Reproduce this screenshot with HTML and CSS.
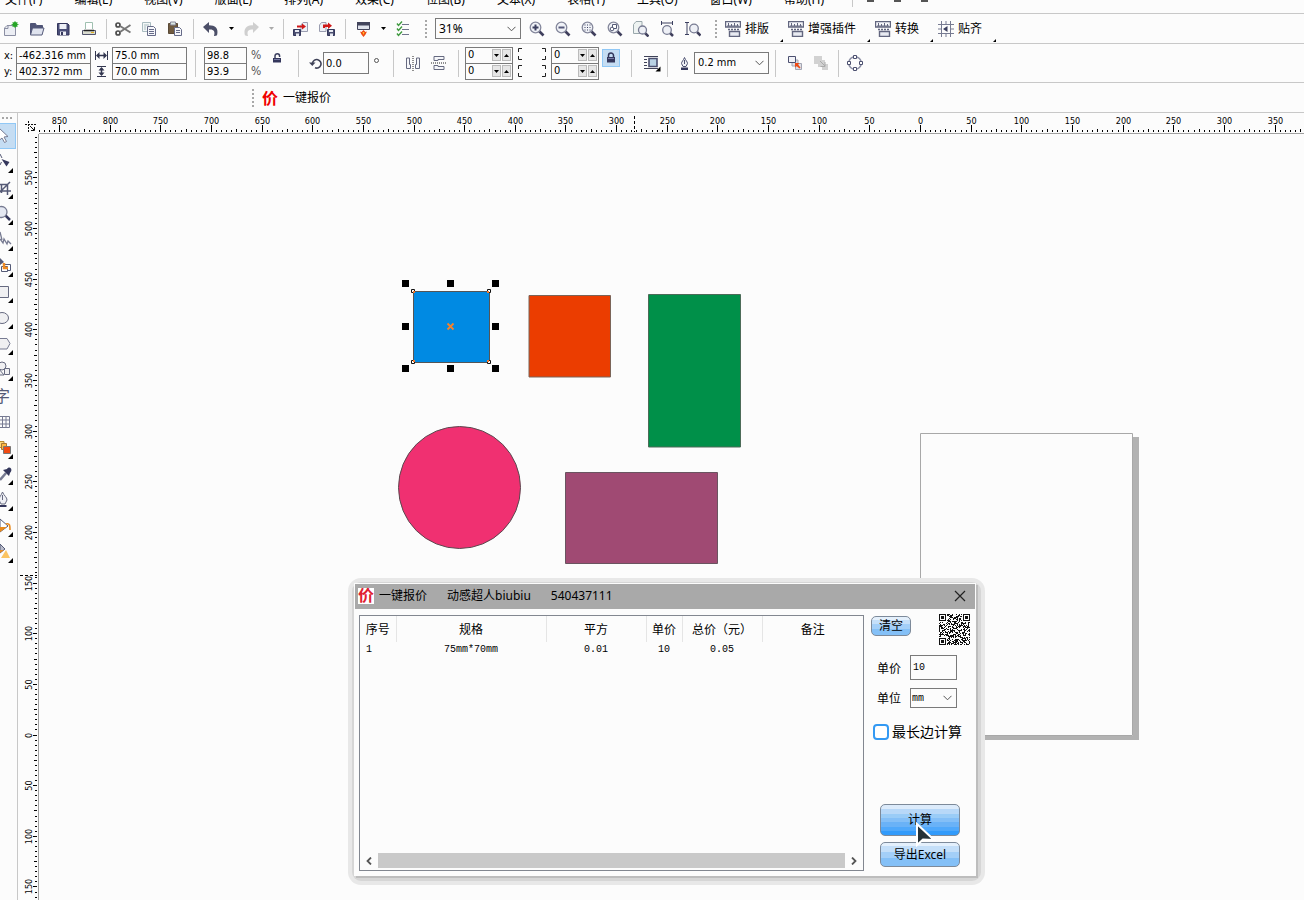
FILE: index.html
```
<!DOCTYPE html>
<html lang="zh-CN">
<head>
<meta charset="utf-8">
<title>一键报价</title>
<link rel="stylesheet" href="styles.css">
</head>
<body>
<svg class="defs" aria-hidden="true">
  <symbol id="i-chev" viewBox="0 0 9 6"><path d="M.5 .8l4 4 4-4" fill="none" stroke="#555"/></symbol>
  <symbol id="i-down" viewBox="0 0 5 3"><path d="M0 0h5L2.500 3z"/></symbol>
  <symbol id="i-up" viewBox="0 0 5 3"><path d="M0 3h5L2.500 0z"/></symbol>
  <symbol id="i-mag" viewBox="0 0 16 16"><path d="M10 10l4.500 4.500" stroke="#3f3f5c" stroke-width="2.600"/><circle cx="6.500" cy="6.500" r="5.300" fill="#f1f3f8" stroke="#85889c" stroke-width="1.300"/></symbol>
  <symbol id="i-press" viewBox="0 0 16 16"><path d="M.5 .5h15v5.500H.5z" fill="#f5f6fa" stroke="#62667f" stroke-width="1.400"/><path d="M3.500 2v3M6.500 3v2M9.500 2v3M12.500 3v2M2 5h12" stroke="#62667f"/><path d="M3 8.500h11" stroke="#62667f" stroke-width="1.500" stroke-dasharray="2 1"/><path d="M4.500 10.500h10v5h-10z" fill="#e9ebf2" stroke="#62667f" stroke-width="1.400"/></symbol>
</svg>

<nav class="menubar">
  <a href="#">文件(F)</a><a href="#">编辑(E)</a><a href="#">视图(V)</a><a href="#">版面(L)</a><a href="#">排列(A)</a><a href="#">效果(C)</a><a href="#">位图(B)</a><a href="#">文本(X)</a><a href="#">表格(T)</a><a href="#">工具(O)</a><a href="#">窗口(W)</a><a href="#">帮助(H)</a>
  <div class="win-marks"><i></i><i></i><i></i></div>
</nav>

<div class="bar main-bar">
  <button class="tb" aria-label="新建"><svg viewBox="0 0 16 16"><path d="M4 4.500h8.500v10h-11V7z" fill="#eceef4" stroke="#8b8fa3"/><path d="M2 7.500h3v-3" fill="none" stroke="#8b8fa3"/><circle cx="12" cy="3.500" r="2.500" fill="#27a527"/><path d="M12 0v7M8.500 3.500h7M9.500 1l5 5M14.500 1l-5 5" stroke="#27a527" stroke-width=".8"/></svg></button>
  <button class="tb" aria-label="打开"><svg viewBox="0 0 16 16"><path d="M1.500 13V2.500h5l1 2h6V7" fill="#4f5476" stroke="#4f5476"/><path d="M3.500 7h11.500l-2 7H1.500z" fill="#dfe3ee" stroke="#555a7a"/></svg></button>
  <button class="tb" aria-label="保存"><svg viewBox="0 0 16 16"><path d="M2.500 2.500h10l1.500 1.500v10H2.500z" fill="#4a4e78" stroke="#34375c"/><path d="M4.500 3h7v5h-7z" fill="#eef0f7"/><path d="M5 10.500h6V14H5z" fill="#eef0f7"/><path d="M6 11h2v3H6z" fill="#34375c"/></svg></button>
  <button class="tb" aria-label="打印"><svg viewBox="0 0 16 16"><path d="M4.500 8V1.500h7V8" fill="#fff" stroke="#9fc0b0"/><path d="M1.500 9.500h13v4h-13z" fill="#d9dbcf" stroke="#50536a"/><path d="M3 9.500h10" stroke="#222" stroke-width="1.500"/><path d="M10 11.500h3" stroke="#e0b020"/></svg></button>
  <i class="sep tight"></i>
  <button class="tb" aria-label="剪切"><svg viewBox="0 0 16 16"><g fill="none" stroke="#4c4c4c" stroke-width="1.700"><circle cx="3" cy="4" r="2"/><circle cx="3" cy="12" r="2"/></g><path d="M5 5l10.500 6.500M5 11l10.500-7" stroke="#777" stroke-width="2"/></svg></button>
  <button class="tb" aria-label="复制"><svg viewBox="0 0 16 16"><path d="M1.500 1.500h8v9h-8z" fill="#f3f7f7" stroke="#a9bcc0"/><path d="M3 4h5M3 6h2M3 8h2" stroke="#a9bcc0"/><path d="M6.500 5.500h6l2 2v7h-8z" fill="#f6f7fb" stroke="#666b88"/><path d="M8 8.500h5M8 10.500h5M8 12.500h5" stroke="#666b88"/></svg></button>
  <button class="tb" aria-label="粘贴"><svg viewBox="0 0 16 16"><path d="M1.500 2.500h9v10h-9z" fill="#6f5a3f" stroke="#5a4a38"/><path d="M3.500 1h5v3h-5z" fill="#dce8e4" stroke="#889"/><path d="M7.500 6.500h5l2 2v6h-7z" fill="#f6f7fb" stroke="#666b88"/><path d="M9 9.500h4M9 11.500h4" stroke="#666b88"/></svg></button>
  <i class="sep"></i>
  <button class="tb" aria-label="撤销"><svg viewBox="0 0 16 16"><path d="M0 6l6-5v3.200c6 0 10 2.800 8 10.300-1 0-1.500.5-3 .5 1.500-5-.5-7-5-6.500V12z" fill="#4c4f68"/></svg></button>
  <button class="drop" aria-label="撤销列表"><svg viewBox="0 0 5 3"><use href="#i-down"/></svg></button>
  <button class="tb" aria-label="重做"><svg viewBox="0 0 16 16"><path d="M16 6l-6-5v3.200c-6 0-10 2.800-8 10.300 1 0 1.500.5 3 .5-1.500-5 .5-7 5-6.500V12z" fill="#cfcfcf"/></svg></button>
  <button class="drop dim" aria-label="重做列表"><svg viewBox="0 0 5 3"><use href="#i-down"/></svg></button>
  <i class="sep"></i>
  <button class="tb" aria-label="导入"><svg viewBox="0 0 16 16"><path d="M8 4l2-2.500h4.500v9H8z" fill="#eef0f6" stroke="#9a9db0"/><path d="M.5 8.500h7v6h-7z" fill="#4a4e70" stroke="#34375c"/><path d="M2 9h4v2H2zM3 12.500h3V15H3z" fill="#e8eaf2"/><path d="M4 6.500V4.500h5V2.500l4 3-4 3V6.500z" fill="#d01818"/></svg></button>
  <button class="tb" aria-label="导出"><svg viewBox="0 0 16 16"><path d="M.5 4l2-2.500H7v9H.5z" fill="#eef0f6" stroke="#9a9db0"/><path d="M8.500 8.500h7v6h-7z" fill="#4a4e70" stroke="#34375c"/><path d="M10 9h4v2h-4zM11 12.500h3V15h-3z" fill="#e8eaf2"/><path d="M4 7V3.500h5V1.500l4 3.200L9 8V6H6v1z" fill="#d01818"/></svg></button>
  <i class="sep"></i>
  <button class="tb" aria-label="应用程序启动器"><svg viewBox="0 0 16 16"><path d="M2.500 1.500h12v7h-12z" fill="#dfe3ec" stroke="#42455c"/><path d="M2 1h13v3.500H2z" fill="#42455c"/><path d="M5 10.500l1.500.5L8.500 9l2 2 1.500-.5-1.500 3L8.500 16l-2-2.500z" fill="#f04a12"/><path d="M7.500 11h2l-1 3z" fill="#ffc030"/></svg></button>
  <button class="drop" aria-label="启动器列表"><svg viewBox="0 0 5 3"><use href="#i-down"/></svg></button>
  <button class="tb" aria-label="选项"><svg viewBox="0 0 16 16"><path d="M7 3.500h7M7 8.500h7M7 13.500h7" stroke="#70758c"/><path d="M2 2.500l1.500 2L7 .5M2 7.500l1.500 2L7 5.500M2 12.500l1.500 2 3.500-4" fill="none" stroke="#3f9a3f" stroke-width="1.400"/></svg></button>
  <i class="grip"></i>
  <div class="select zoom-level"><select aria-label="缩放级别"><option>31%</option></select><svg class="chev"><use href="#i-chev"/></svg></div>
  <div class="zooms">
    <button class="tb" aria-label="放大"><svg viewBox="0 0 16 16"><use href="#i-mag"/><path d="M3.500 6.500h6M6.500 3.500v6" stroke="#3c4060" stroke-width="2"/></svg></button>
    <button class="tb" aria-label="缩小"><svg viewBox="0 0 16 16"><use href="#i-mag"/><path d="M3.500 6.500h6" stroke="#55597a" stroke-width="2"/></svg></button>
    <button class="tb" aria-label="缩放选定对象"><svg viewBox="0 0 16 16"><use href="#i-mag"/><path d="M3.500 4h6M3.500 6.500h6M3.500 9h6" stroke="#3c4060" stroke-dasharray="1 1.500"/></svg></button>
    <button class="tb" aria-label="缩放全部对象"><svg viewBox="0 0 16 16"><use href="#i-mag"/><path d="M5.500 3.500h4v4h-4z" fill="#fff" stroke="#555a76"/><circle cx="5" cy="8" r="1.800" fill="#fff" stroke="#555a76"/></svg></button>
    <button class="tb" aria-label="显示页面"><svg viewBox="0 0 16 16"><path d="M.5 3.500l2.500-3h6v12H.5z" fill="#eef3f2" stroke="#9aa8ac"/><path d="M12 12l3.500 3.500" stroke="#3f3f5c" stroke-width="2.500"/><circle cx="9.500" cy="9" r="4" fill="#eef0f6" stroke="#777b92" stroke-width="1.300"/></svg></button>
    <button class="tb" aria-label="按页宽显示"><svg viewBox="0 0 16 16"><path d="M2.500 0v4M13.500 0v4M3 2h10" stroke="#3c4060"/><path d="M11 12l3 3" stroke="#3f3f5c" stroke-width="2.500"/><circle cx="8" cy="9" r="4.300" fill="#eef0f6" stroke="#777b92" stroke-width="1.300"/></svg></button>
    <button class="tb" aria-label="按页高显示"><svg viewBox="0 0 16 16"><path d="M0 1.500h4M0 13.500h4M2 2v11" stroke="#3c4060"/><path d="M12 11l3.500 3.500" stroke="#3f3f5c" stroke-width="2.500"/><circle cx="9" cy="7.500" r="4.300" fill="#eef0f6" stroke="#777b92" stroke-width="1.300"/></svg></button>
  </div>
  <i class="grip"></i>
  <div class="plugins">
    <button class="plugin"><svg viewBox="0 0 16 16"><use href="#i-press"/></svg>排版</button>
    <button class="plugin"><svg viewBox="0 0 16 16"><use href="#i-press"/></svg>增强插件</button>
    <button class="plugin"><svg viewBox="0 0 16 16"><use href="#i-press"/></svg>转换</button>
    <button class="plugin"><svg viewBox="0 0 16 16"><path d="M3.500 0v16M8 0v3M8 13v3M12.500 0v16M0 3.500h16M0 8h3M13 8h3M0 12.500h16" stroke="#777b92"/><path d="M9.500 5v6L5 8z" fill="#3c4060"/></svg>贴齐</button>
  </div>
</div>

<div class="bar prop-bar">
  <div class="pair labels"><label for="px">x:</label><label for="py">y:</label></div>
  <div class="pair fields"><input id="px" value="-462.316 mm"><input id="py" value="402.372 mm"></div>
  <div class="pair marks"><svg viewBox="0 0 13 11"><path d="M.5 1v9M12.500 1v9" stroke="#333750"/><path d="M2 5.500h9" stroke="#333750" stroke-width="1.500"/><path d="M1 5.500L4.500 2v7zM12 5.500L8.500 2v7z" fill="#333750"/></svg><svg viewBox="0 0 13 11"><path d="M2 .5h9M2 10.500h9" stroke="#333750"/><path d="M6.500 2v7" stroke="#333750" stroke-width="1.500"/><path d="M6.500 1L9.500 4.500h-6zM6.500 10l3-3.500h-6z" fill="#333750"/></svg></div>
  <div class="pair fields"><input aria-label="宽度" value="75.0 mm"><input aria-label="高度" value="70.0 mm"></div>
  <i class="sep wide"></i>
  <div class="pair fields short"><input aria-label="水平缩放" value="98.8"><input aria-label="垂直缩放" value="93.9"></div>
  <div class="pair percent"><span>%</span><span>%</span></div>
  <button class="tb lock" aria-label="锁定比率"><svg viewBox="0 0 16 16"><path d="M6 8.500V6a2.300 2.300 0 0 1 4.600 0v1" fill="none" stroke="#3c4060" stroke-width="1.500"/><path d="M4 8h8v4.500H4z" fill="#34375c"/><path d="M5 9.500h6" stroke="#777ba5"/></svg></button>
  <i class="sep wide"></i>
  <label class="mark" for="rot" aria-label="旋转角度"><svg viewBox="0 0 13 13"><path d="M3.500 6A4.300 4.300 0 1 1 6 10.800" fill="none" stroke="#3f4258" stroke-width="1.600"/><path d="M0 5.500h6.500L3.300 9z" fill="#3f4258"/></svg></label>
  <input class="field" id="rot" value="0.0">
  <span class="degree"></span>
  <i class="sep"></i>
  <button class="tb" aria-label="水平镜像"><svg viewBox="0 0 16 16"><path d="M1.500 3v10.500h4v-4h-1V3zM14.500 3v10.500h-4v-4h1V3z" fill="#f6f7fa" stroke="#666a80"/><path d="M8 1v15" stroke="#222" stroke-dasharray="1 1"/></svg></button>
  <button class="tb" aria-label="垂直镜像"><svg viewBox="0 0 16 16"><path d="M3 1.500h10v3H7v1H3zM3 14.500h10v-3H7v-1H3z" fill="#f6f7fa" stroke="#666a80"/><path d="M0 8h16" stroke="#222" stroke-dasharray="1 1"/></svg></button>
  <i class="sep"></i>
  <div class="pair spins">
    <div class="spin"><input aria-label="左上角圆角" value="0"><button aria-label="减"><svg viewBox="0 0 5 3"><use href="#i-down"/></svg></button><button aria-label="加"><svg viewBox="0 0 5 3"><use href="#i-up"/></svg></button></div>
    <div class="spin"><input aria-label="左下角圆角" value="0"><button aria-label="减"><svg viewBox="0 0 5 3"><use href="#i-down"/></svg></button><button aria-label="加"><svg viewBox="0 0 5 3"><use href="#i-up"/></svg></button></div>
  </div>
  <svg class="corners" viewBox="0 0 38 32"><path d="M9 1.500H5.500V5M5.500 9v3.500H9M29 1.500h3.500V5M32.500 9v3.500H29M9 18.500H5.500V22M5.500 26v3.500H9M29 18.500h3.500V22M32.500 26v3.500H29" fill="none" stroke="#222"/></svg>
  <div class="pair spins">
    <div class="spin"><input aria-label="右上角圆角" value="0"><button aria-label="减"><svg viewBox="0 0 5 3"><use href="#i-down"/></svg></button><button aria-label="加"><svg viewBox="0 0 5 3"><use href="#i-up"/></svg></button></div>
    <div class="spin"><input aria-label="右下角圆角" value="0"><button aria-label="减"><svg viewBox="0 0 5 3"><use href="#i-down"/></svg></button><button aria-label="加"><svg viewBox="0 0 5 3"><use href="#i-up"/></svg></button></div>
  </div>
  <button class="lock-on" aria-label="一起编辑"><svg viewBox="0 0 16 16"><path d="M5.500 7V5.500a2.500 2.500 0 0 1 5 0V7" fill="none" stroke="#34375c" stroke-width="1.500"/><path d="M4 7h8v5.500H4z" fill="#34375c"/><path d="M5 8.500h6" stroke="#777ba5"/></svg></button>
  <i class="sep wide"></i>
  <button class="wrap" aria-label="段落文本换行"><svg viewBox="0 0 18 18"><path d="M1 2.500h14M1 5.500h3M1 8.500h3M1 11.500h3M1 14.500h14" stroke="#3f4258"/><path d="M6 4.500h8v8H6z" fill="#b9d2e4" stroke="#4c5070" stroke-width="1.600"/><path d="M17.500 12.500v5h-5z"/></svg></button>
  <i class="sep"></i>
  <label class="mark pen" for="outline" aria-label="轮廓宽度"><svg viewBox="0 0 13 13"><path d="M6.500 .5c-1 3-3 4-3 6L5 9.500h3l1.500-3c0-2-2-3-3-6z" fill="#f0f1f6" stroke="#4c5070"/><path d="M6.500 3v4" stroke="#4c5070"/><path d="M3 10.500h7V13H3z" fill="#34375c"/></svg></label>
  <div class="select outline"><select id="outline"><option>0.2 mm</option></select><svg class="chev"><use href="#i-chev"/></svg></div>
  <i class="sep"></i>
  <button class="tb" aria-label="到图层前面"><svg viewBox="0 0 16 16"><path d="M8.500 8.500h6v6h-6zM5 5h6v6H5z" fill="#dfe0e6" stroke="#a3a5b2"/><path d="M1.500 1.500h7v6h-7z" fill="#f2f3f8" stroke="#4c5070"/><path d="M8 8h4.500L11 9.500l2.500 3-1 1-3-2.500L8 12.500z" fill="#f04a12"/></svg></button>
  <button class="tb" aria-label="到图层后面"><svg viewBox="0 0 16 16"><path d="M1 1h8v8H1zM9 9h6v6H9zM5 5h7v7H5z" fill="#d2d2d2"/><path d="M7 6l5 5m0-4v4.500H7.500" fill="none" stroke="#aaa"/></svg></button>
  <i class="sep tight"></i>
  <button class="tb" aria-label="转换为曲线"><svg viewBox="0 0 16 16"><circle cx="8" cy="8" r="6.300" fill="none" stroke="#8a8da3" stroke-width="1.500"/><path d="M6.500 .5h3v3h-3zM6.500 12.500h3v3h-3zM.5 6.500h3v3h-3zM12.500 6.500h3v3h-3z" fill="#fff" stroke="#4c5070"/></svg></button>
</div>

<div class="bar quote-bar">
  <i class="grip"></i>
  <button class="quote"><b>价</b>一键报价</button>
</div>

<main class="work">
  <div class="toolbox">
    <i class="grip-h"></i>
    <button class="tool active" aria-label="选择工具"><svg viewBox="0 0 17 26"><path d="M-1 5l9 8.500-4 .5 2.500 4.500-2 1L2 15l-3 2.500z" fill="#fff" stroke="#777b92"/></svg></button>
    <button class="tool sub" aria-label="形状工具"><svg viewBox="0 0 17 26"><path d="M0 5l2 4M0 16l1.500-3" stroke="#555a76"/><path d="M1.500 10l8 3-3 4.500z" fill="#34375c"/></svg></button>
    <button class="tool sub" aria-label="裁剪工具"><svg viewBox="0 0 17 26"><path d="M0 9.500h7.500V20M0 16h11M1.500 18V10M0 17L10 7" fill="none" stroke="#555a76" stroke-width="1.500"/></svg></button>
    <button class="tool sub" aria-label="缩放工具"><svg viewBox="0 0 17 26"><path d="M5 14l5 5" stroke="#34375c" stroke-width="2.500"/><circle cx="1.500" cy="11" r="5.500" fill="#e4e8f2" stroke="#777b92" stroke-width="1.300"/></svg></button>
    <button class="tool sub" aria-label="手绘工具"><svg viewBox="0 0 17 26"><path d="M0 5l2 8M0 12l3 4 1-4 3 5 1-3 3 3" fill="none" stroke="#777b92" stroke-width="1.300"/></svg></button>
    <button class="tool sub" aria-label="智能填充工具"><svg viewBox="0 0 17 26"><path d="M0 5l4 4-4 3" fill="#555a76"/><path d="M4.500 11.500h6v6h-6z" fill="#fff" stroke="#555a76"/><path d="M1.500 13.500h6v5h-6z" fill="#fff" stroke="#555a76"/><path d="M4 10v5h4" fill="none" stroke="#f08a20" stroke-width="2.500"/></svg></button>
    <button class="tool sub" aria-label="矩形工具"><svg viewBox="0 0 17 26"><path d="M-1 7.500h9.500v11H-1z" fill="#f0f0f2" stroke="#666a80"/></svg></button>
    <button class="tool sub" aria-label="椭圆工具"><svg viewBox="0 0 17 26"><ellipse cx="2" cy="13" rx="6.500" ry="5.500" fill="#f0f0f2" stroke="#666a80"/></svg></button>
    <button class="tool sub" aria-label="多边形工具"><svg viewBox="0 0 17 26"><path d="M-1 7.500h8l3 5-3 5.500h-8z" fill="#f0f0f2" stroke="#777b92"/></svg></button>
    <button class="tool sub" aria-label="基本形状"><svg viewBox="0 0 17 26"><circle cx="2" cy="9" r="4" fill="#f0f0f2" stroke="#666a80"/><path d="M-1 12l5 6h-5zM4.500 11.500h5v6h-5z" fill="#f0f0f2" stroke="#666a80"/></svg></button>
    <button class="tool text-tool" aria-label="文本工具"><span>字</span></button>
    <button class="tool" aria-label="表格工具"><svg viewBox="0 0 17 26"><path d="M-1 7.500H9.500v11H-1M-1 11h10M-1 15h10M2.500 8v10M6 8v10" fill="none" stroke="#777b92"/></svg></button>
    <button class="tool sub" aria-label="调和工具"><svg viewBox="0 0 17 26"><path d="M-1 6.500h5v6h-5z" fill="#ffd979" stroke="#b98a30"/><path d="M1.500 8.500h5v6h-5z" fill="#fdb740" stroke="#a87430"/><path d="M3.500 11.500h7v7h-7z" fill="#f04a12" stroke="#777"/></svg></button>
    <button class="tool sub" aria-label="滴管工具"><svg viewBox="0 0 17 26"><path d="M0 19l6-7" stroke="#777b92" stroke-width="2.500"/><path d="M3 9l6 6 1-3c1-1 2-3 1-4.500S8 6 7 8z" fill="#34375c"/></svg></button>
    <button class="tool sub" aria-label="轮廓笔"><svg viewBox="0 0 17 26"><path d="M2.500 5C1 9 -1 10-1 13l2 4h4l2-4c0-3-3-4-4.500-8z" fill="#f0f1f6" stroke="#666a80"/><path d="M2.500 8v5" stroke="#666a80"/><path d="M0 18h6.500v2H0z" fill="#34375c"/></svg></button>
    <button class="tool sub" aria-label="填充工具"><svg viewBox="0 0 17 26"><path d="M0 6l8 7-8 6z" fill="#fff" stroke="#555a76"/><path d="M0 14h7l-7 5z" fill="#e98a1c"/><path d="M6 11c4-1 4 2 4 6" fill="none" stroke="#e98a1c" stroke-width="1.600"/></svg></button>
    <button class="tool sub" aria-label="交互式填充"><svg viewBox="0 0 17 26"><path d="M0 5l5 5-5 4z" fill="#b9bccb" stroke="#555a76"/><path d="M0 11h4l-4 3z" fill="#e98a1c"/><path d="M6 11l4 8H1z" fill="#fbc462"/></svg></button>
  </div>
  <div class="stage">
    <div class="ruler-corner"><svg viewBox="0 0 20 20"><path d="M10.500 8v11M7 11.500h11" stroke="#111" stroke-dasharray="2 1"/><path d="M12 13l4 4M16.500 14v3.500H13" fill="none" stroke="#111"/></svg></div>
    <svg class="ruler-h" id="rulerH" aria-hidden="true"></svg>
    <svg class="ruler-v" id="rulerV" aria-hidden="true"></svg>
    <div class="canvas">
      <svg class="drawing" aria-label="绘图页面">
        <g transform="translate(-39 -134)">
          <path d="M926 736h207V437h6v303H926z" fill="#b2b2b2"/>
          <path d="M920.500 433.500h212v302h-212z" fill="#fcfcfc" stroke="#a8a8a8"/>
          <path d="M413.500 291.500h76v71h-76z" fill="#008ae3" stroke="#555"/>
          <path d="M529 295.500h81.500V377H529z" fill="#eb3d00" stroke="#7a6458"/>
          <path d="M648.500 294.500h92V447h-92z" fill="#009049" stroke="#4c6b58"/>
          <circle cx="459.500" cy="487.500" r="61" fill="#f03071" stroke="#5a4a50"/>
          <path d="M565.500 472.500h152v91h-152z" fill="#a04a73" stroke="#6a5460"/>
          <path d="M402 280h7v7h-7zM447 280h7v7h-7zM492 280h7v7h-7zM402 323h7v7h-7zM492 323h7v7h-7zM402 365h7v7h-7zM447 365h7v7h-7zM492 365h7v7h-7z"/>
          <path d="M411.500 289.500h3v3h-3zM487.500 289.500h3v3h-3zM411.500 360.500h3v3h-3zM487.500 360.500h3v3h-3z" fill="#fff" stroke="#111"/>
          <path d="M413 291h2v2h-2zM487 291h2v2h-2zM413 360h2v2h-2zM487 360h2v2h-2z" fill="#f07a30"/>
          <path d="M447.500 323.500l6 6M453.500 323.500l-6 6" stroke="#f5822a" stroke-width="1.800"/>
        </g>
      </svg>

      <section class="dialog" aria-label="一键报价">
        <header class="title">
          <b class="logo">价</b><span>一键报价</span><span>动感超人biubiu</span><span>540437111</span>
          <button class="close" aria-label="关闭"><svg viewBox="0 0 12 12"><path d="M1 1l10 10M11 1L1 11" stroke="#222" stroke-width="1.200"/></svg></button>
        </header>
        <div class="content">
          <div class="list">
            <table>
              <colgroup><col class="c1"><col class="c2"><col class="c3"><col class="c4"><col class="c5"><col></colgroup>
              <thead><tr><th>序号</th><th>规格</th><th>平方</th><th>单价</th><th>总价（元）</th><th>备注</th></tr></thead>
              <tbody><tr><td>1</td><td>75mm*70mm</td><td>0.01</td><td>10</td><td>0.05</td><td></td></tr></tbody>
            </table>
            <div class="scroll"><button aria-label="向左滚动"><svg viewBox="0 0 6 8"><path d="M5 .5L1.500 4 5 7.500" fill="none" stroke="#555" stroke-width="1.800"/></svg></button><i></i><button aria-label="向右滚动"><svg viewBox="0 0 6 8"><path d="M1 .5L4.500 4 1 7.500" fill="none" stroke="#555" stroke-width="1.800"/></svg></button></div>
          </div>
          <div class="side">
            <div class="top"><button class="glossy clear">清空</button><svg class="qr" id="qr" viewBox="0 0 31 31" shape-rendering="crispEdges" role="img" aria-label="二维码"></svg></div>
            <div class="row"><label for="price">单价</label><input id="price" value="10"></div>
            <div class="row"><label for="unit">单位</label><div class="select unit"><select id="unit"><option>mm</option></select><svg class="chev"><use href="#i-chev"/></svg></div></div>
            <label class="check"><input type="checkbox">最长边计算</label>
            <div class="actions">
              <button class="glossy calc">计算</button>
              <button class="glossy export">导出Excel</button>
            </div>
          </div>
        </div>
        <svg class="cursor" viewBox="0 0 22 26"><path d="M2 2v21l6-5.500 11 .5z" fill="#263238" stroke="#fff" stroke-width="2"/></svg>
      </section>
    </div>
  </div>
</main>
<script src="app.js"></script>
</body>
</html>
```
FILE: styles.css
```
* { box-sizing: border-box; }
body {
  margin: 0;
  height: 100vh;
  display: flex;
  flex-direction: column;
  overflow: hidden;
  background: #fcfcfc;
  color: #000;
  font: 12px/16px "Noto Sans", "Noto Sans CJK SC", sans-serif;
}
button, input, select { font: inherit; color: inherit; margin: 0; padding: 0; border: 0; background: none; border-radius: 0; }
svg { display: block; }
.defs { display: none; }

.menubar {
  display: flex;
  align-items: flex-start;
  gap: 32px;
  height: 14px;
  flex: none;
  overflow: hidden;
  padding-left: 5px;
  border-bottom: 1px solid #c8c8c8;
}
.menubar a { margin-top: -8px; color: #000; text-decoration: none; white-space: nowrap; }
.win-marks { display: flex; gap: 20px; height: 7px; margin-left: -4px; padding-left: 14px; border-left: 1px solid #c8c8c8; }
.win-marks i { width: 7px; height: 2px; background: #555; }

.bar { display: flex; align-items: center; flex: none; border-bottom: 1px solid #c8c8c8; }
.bar > *, .zooms > *, .plugins > * { flex: none; }
.main-bar { height: 30px; }
.main-bar > .tb:first-child { margin-left: -2px; }
.tb { width: 26px; height: 26px; display: grid; place-items: center; }
.tb svg, .plugin svg { width: 16px; height: 16px; }
.drop { width: 14px; height: 26px; display: grid; place-items: center; }
.drop svg { width: 5px; height: 3px; }
.drop.dim { fill: #aaa; }
.sep { width: 10px; height: 20px; background: linear-gradient(#c8c8c8, #c8c8c8) center / 1px 100% no-repeat; }
.prop-bar .sep { width: 13px; height: 27px; }
.bar .sep.tight { width: 8px; }
.bar .sep.wide { width: 17px; }
.grip { width: 19px; height: 18px; background: repeating-linear-gradient(#a8a8a8 0 2px, transparent 2px 4px) center / 2px 100% no-repeat; }
.zooms { display: flex; margin-left: 3px; }
.plugins { display: flex; gap: 5px; }
.plugin { position: relative; display: flex; align-items: center; gap: 4px; height: 26px; padding: 1px 14px 0 0; }
.plugin::after { content: ""; position: absolute; right: 0; bottom: 0; border-top: 3px solid transparent; border-right: 3px solid #000; }

.select { display: grid; align-items: center; border: 1px solid #7a7a7a; background: #fcfcfc; }
.select select { grid-area: 1 / 1; appearance: none; width: 100%; height: 100%; padding-left: 3px; outline: 0; }
.chev { grid-area: 1 / 1; justify-self: end; width: 9px; height: 6px; margin-right: 4px; pointer-events: none; }
.zoom-level { width: 86px; height: 21px; }

.prop-bar { height: 39px; font-family: "DejaVu Sans Condensed", "Noto Sans", sans-serif; font-size: 11px; }
.pair { display: grid; grid-template: 16px 16px / minmax(0, 1fr); }
.labels { width: 16px; padding-left: 4px; line-height: 17px; }
.fields { width: 75px; height: 33px; border: 1px solid #7a7a7a; }
.fields.short { width: 43px; }
.fields input { width: 100%; min-width: 0; height: 15px; padding-left: 2px; line-height: 15px; }
.fields input + input { height: 16px; margin-top: -1px; border-top: 1px solid #7a7a7a; }
.marks { width: 21px; place-items: center; }
.marks svg { width: 13px; height: 11px; }
.percent { width: 17px; padding-left: 4px; color: #555; font-size: 12px; }
.lock { margin-bottom: 10px; }
.mark { width: 16px; display: grid; place-items: center; }
.mark svg { width: 13px; height: 13px; }
.field { width: 46px; height: 22px; padding-left: 2px; border: 1px solid #7a7a7a; }
.degree { width: 5px; height: 5px; margin: 0 8px 6px 5px; border: 1px solid #555; border-radius: 50%; }
.spins { width: 48px; height: 33px; border: 1px solid #7a7a7a; }
.spin { display: flex; align-items: center; gap: 1px; height: 15px; padding-right: 1px; }
.spin + .spin { border-top: 1px solid #7a7a7a; height: 16px; margin-top: -1px; }
.spin input { flex: 1; min-width: 0; padding-left: 2px; height: 14px; }
.spin button { flex: none; width: 9px; height: 12px; display: grid; place-items: center; background: #e6e6e6; border: 1px solid #bbb; }
.spin button svg { width: 5px; height: 3px; }
.corners { width: 38px; height: 32px; }
.lock-on { width: 16px; height: 16px; margin: 0 4px 10px; background: #c5ddf3; outline: 1px solid #90c8f6; }
.lock-on svg { width: 16px; height: 16px; }
.wrap { margin-left: 3px; }
.wrap svg { width: 18px; height: 18px; }
.pen { width: 20px; }
.outline { width: 75px; height: 22px; }

.quote-bar { height: 30px; padding-left: 243px; }
.quote { display: flex; align-items: center; gap: 5px; padding-top: 1px; }
.quote b { color: #f00000; font-size: 16px; }

.work { flex: 1; min-height: 0; display: grid; grid-template-columns: 18px minmax(0, 1fr); }
.toolbox { display: flex; flex-direction: column; border-right: 1px solid #c8c8c8; overflow: hidden; }
.grip-h { flex: none; height: 2px; width: 12px; margin: 4px 0 4px 2px; background: repeating-linear-gradient(90deg, #a8a8a8 0 2px, transparent 2px 4px); }
.tool { position: relative; flex: none; width: 17px; height: 26px; }
.tool svg { width: 17px; height: 26px; }
.tool.active { width: 16px; background: #c5ddf3; box-shadow: inset -1px 0 #90c8f6, inset 0 1px #90c8f6, inset 0 -1px #90c8f6; }
.tool.sub::after { content: ""; position: absolute; right: 4px; bottom: 2px; border-top: 5px solid transparent; border-right: 5px solid #000; }
.text-tool span { display: block; margin-left: -6px; font-size: 16px; color: #555a76; text-align: left; }

.stage { display: grid; grid-template: 21px minmax(0, 1fr) / 21px minmax(0, 1fr); }
.ruler-corner svg { width: 20px; height: 20px; }
.ruler-h { width: 100%; height: 21px; border-bottom: 1px solid #a0a0a0; }
.ruler-v { width: 21px; height: 100%; border-right: 1px solid #a0a0a0; }
.ruler-h text, .ruler-v text { font: 9px "DejaVu Sans Condensed", "Noto Sans", sans-serif; text-anchor: middle; }
.canvas { position: relative; overflow: hidden; }
.drawing { width: 100%; height: 100%; }

.dialog {
  position: absolute;
  left: 315px;
  top: 449px;
  width: 622px;
  isolation: isolate;
  background: #fcfcfc;
  border: 1px solid #ababab;
}
.dialog::before {
  content: "";
  position: absolute;
  z-index: -2;
  inset: -2px -6px -6px -3px;
  border-radius: 9px;
  background: #d6d6d6;
  box-shadow: 0 0 0 4px #e8e8e8;
}
.dialog::after { content: ""; position: absolute; z-index: -1; inset: -1px; background: #fcfcfc; box-shadow: 2px 2px #bdbdbd; }
.title { display: flex; align-items: center; gap: 20px; height: 25px; padding: 0 9px 2px 3px; background: #a9a9a9; }
.logo { width: 16px; height: 16px; margin-right: -15px; background: #fff; color: #e02030; font-size: 16px; line-height: 15px; }
.close { margin-left: auto; }
.close svg { width: 12px; height: 12px; }
.content { display: flex; gap: 7px; padding: 6px 4px 4px; }
.list { flex: 1; min-width: 0; display: flex; flex-direction: column; border: 1px solid #828790; }
table { width: 100%; table-layout: fixed; border-collapse: collapse; }
.c1 { width: 36px; } .c2 { width: 150px; } .c3 { width: 100px; } .c4 { width: 36px; } .c5 { width: 80px; }
th { height: 26px; padding: 1px 0 0; font-weight: 400; white-space: nowrap; border-right: 1px solid #e5e5e5; }
th:last-child { border-right: 0; }
td { height: 16px; padding: 0; text-align: center; font: 10px/14px "Liberation Mono", monospace; }
td:first-child { text-align: left; padding-left: 6px; }
.scroll { display: flex; gap: 5px; align-items: center; margin-top: auto; height: 19px; padding: 0 5px; }
.scroll i { flex: 1; height: 15px; background: #c9c9c9; }
.scroll button { width: 8px; display: grid; place-items: center; }
.scroll svg { width: 6px; height: 8px; }
.side { width: 100px; height: 256px; display: flex; flex-direction: column; }
.top { display: flex; align-items: flex-start; justify-content: space-between; height: 40px; padding: 1px 1px 0 0; }
.qr { width: 31px; height: 31px; margin-top: -2px; }
.glossy {
  border: 1px solid #7d8a9a;
  border-radius: 5px;
  background: linear-gradient(#e4f0fc 0 15%, #c4dff9 15% 40%, #a3cff8 40% 65%, #84c0f7 65%);
}
.clear { width: 40px; height: 20px; line-height: 16px; }
.calc { height: 32px; background: linear-gradient(#dcebfb 0 14%, #b8d8f8 14% 30%, #9accf7 30% 44%, #84bff7 44% 58%, #6ab2f7 58% 72%, #4fa8fb 72% 88%, #329bfb 88%); }
.export { height: 25px; }
.row { display: flex; align-items: center; justify-content: space-between; padding: 0 14px 0 6px; margin-bottom: 8px; }
.row label { padding-top: 2px; }
.row input { width: 47px; height: 25px; padding-left: 2px; border: 1px solid #7a7a7a; font: 10px "Liberation Mono", monospace; }
.unit { width: 47px; height: 20px; font: 10px "Liberation Mono", monospace; }
.unit select { padding-left: 1px; }
.check { display: flex; align-items: center; gap: 3px; margin: 6px 0 0 2px; font-size: 14px; line-height: 20px; white-space: nowrap; }
.check input { appearance: none; flex: none; width: 16px; height: 16px; border: 2px solid #3399f3; border-radius: 4px; background: #fff; }
.actions { display: flex; flex-direction: column; gap: 6px; margin: auto 11px 4px 9px; }
.cursor { position: absolute; left: 560px; top: 238px; width: 22px; height: 26px; }
```
FILE: app.js
```
const NS = "http://www.w3.org/2000/svg";
const STEP = 50.65 / 10;

function add(parent, name, attrs, text) {
  const el = document.createElementNS(NS, name);
  for (const k in attrs) el.setAttribute(k, attrs[k]);
  if (text !== undefined) el.textContent = text;
  parent.appendChild(el);
}

function ruler(svg, origin, length, vertical, pointer) {
  let d = "";
  const first = Math.ceil(-origin / STEP);
  const last = Math.floor((length - origin) / STEP);
  for (let i = first; i <= last; i++) {
    const p = Math.floor(origin + i * STEP) + 0.5;
    const size = i % 10 === 0 ? 4 : i % 5 === 0 ? 3 : 2;
    const from = 19 - (size === 4 && !vertical ? 7 : size);
    d += vertical ? `M${from} ${p}H19` : `M${p} ${from}V19`;
    if (i % 10 === 0) {
      const label = Math.abs(i * 5);
      if (vertical) add(svg, "text", { transform: `translate(14 ${p}) rotate(-90)` }, label);
      else add(svg, "text", { x: p, y: 11 }, label);
    }
  }
  add(svg, "path", { d, stroke: "#000", fill: "none" });
  const line = vertical ? `M2 ${pointer}H19` : `M${pointer} 3V19`;
  add(svg, "path", { d: line, stroke: "#000", "stroke-dasharray": "3 2" });
}

const rulerH = document.getElementById("rulerH");
const rulerV = document.getElementById("rulerV");
ruler(rulerH, 881.5, rulerH.getBoundingClientRect().width, false, 595.5);
ruler(rulerV, 601, rulerV.getBoundingClientRect().height, true, 441.5);

const qr = document.getElementById("qr");
const N = 31;
const finder = (x, y) => {
  const m = Math.max(Math.abs(x - 3), Math.abs(y - 3));
  return m <= 4 ? (m === 3 || m <= 1 ? 1 : 0) : -1;
};
let seed = 540437111;
let cells = "";
for (let y = 0; y < N; y++) {
  for (let x = 0; x < N; x++) {
    seed = (Math.imul(seed, 1103515245) + 12345) >>> 0;
    let on = (seed >>> 16) & 1;
    for (const f of [finder(x, y), finder(N - 1 - x, y), finder(x, N - 1 - y)]) if (f >= 0) on = f;
    if (on) cells += `M${x} ${y}h1v1h-1z`;
  }
}
add(qr, "path", { d: cells, fill: "#111" });
```
